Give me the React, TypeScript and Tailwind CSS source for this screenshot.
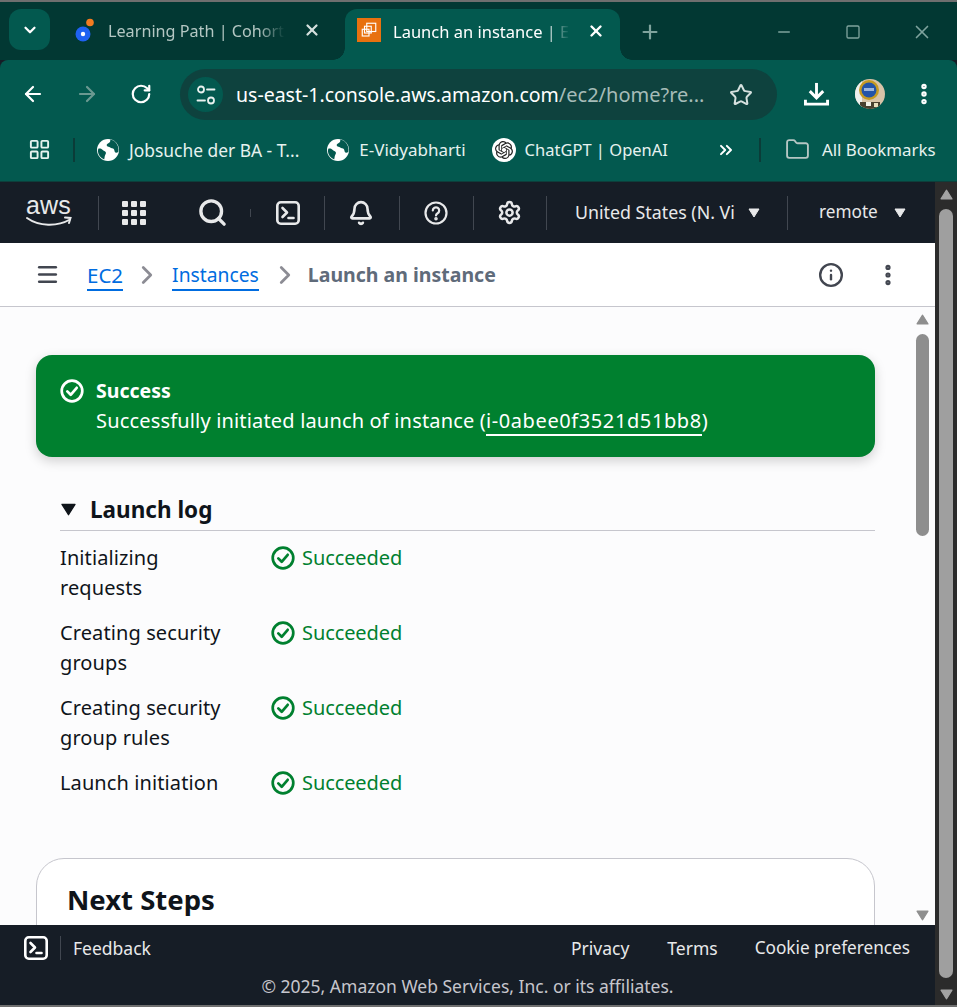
import React from 'react';
import {
    ArrowLeft,
    ArrowRight,
    Bell,
    ChevronDown,
    ChevronRight,
    ChevronsRight,
    EllipsisVertical,
    Folder,
    Info,
    LayoutGrid,
    Menu,
    Minus,
    Plus,
    RotateCw,
    Search,
    Settings,
    Square,
    Star,
    X,
} from 'lucide-react';
import { SiOpenai } from 'react-icons/si';

const FONT = "font-['Noto_Sans','Open_Sans',sans-serif]";

const Caret = ({ className }: { className: string }) => (
    <svg viewBox="0 0 12 10" className={className} fill="currentColor">
        <path d="M1 1h10L6 9z" stroke="currentColor" strokeLinejoin="round" />
    </svg>
);

const CaretUp = ({ className }: { className: string }) => (
    <svg viewBox="0 0 12 10" className={className} fill="currentColor">
        <path d="M1 9h10L6 1z" stroke="currentColor" strokeLinejoin="round" />
    </svg>
);

const CheckCircle = ({ className }: { className: string }) => (
    <svg viewBox="0 0 24 24" className={className} fill="none" stroke="currentColor" strokeWidth="2.7">
        <circle cx="12" cy="12" r="10.3" />
        <path d="M7.3 12.4l3.4 3.4 6-7" strokeLinecap="round" strokeLinejoin="round" />
    </svg>
);

const ConsoleIcon = ({ className }: { className: string }) => (
    <svg viewBox="0 0 24 24" className={className} fill="none" stroke="currentColor" strokeWidth="2.6">
        <rect x="1.3" y="1.3" width="21.4" height="21.4" rx="3.5" />
        <path d="M6.5 7l4.5 4.5L6.5 16" strokeLinecap="round" strokeLinejoin="round" />
        <path d="M12.5 17h5" strokeLinecap="round" />
    </svg>
);

const GlobeFilled = () => (
    <svg viewBox="0 0 22 22" className="w-[22px] h-[22px] shrink-0">
        <circle cx="11" cy="11" r="11" fill="#ffffff" />
        <path d="M13 .6c1 2-.4 3.300-2 3.900-1.200.5-1.600 1.600-1 2.500.7 1 2.200.6 3.200 1.400 1 .8 2.800.6 3.600 1.600.9 1.100.5 2.900 1.700 3.600.9.500 2 0 2.900-.8.500-3.400-.2-6.200-2.100-8.600C18.300 2.500 15.800 1 13 .6z" fill="#03594f" />
        <path d="M1.500 9.500c1.500-.3 3 .2 4 1.300 1 1 2.700 1.200 3.300 2.500.6 1.300-.6 2.400-1 3.600-.3 1.100-.2 2.400-.6 3.500C3.500 19 1.300 16 .9 12.600c-.1-1.100.1-2.100.6-3.100z" fill="#03594f" />
    </svg>
);

const SiteInfoIcon = () => (
    <svg viewBox="0 0 20 20" className="w-[20px] h-[20px]" fill="none" stroke="#e8f1ef" strokeWidth="1.8" strokeLinecap="round">
        <circle cx="5" cy="4.500" r="3" />
        <path d="M11 4.500h7.500" />
        <path d="M1.500 15.500H9" />
        <circle cx="15" cy="15.500" r="3" />
    </svg>
);

const DownloadIcon = () => (
    <svg viewBox="0 0 26 26" className="ml-[27px] w-[25px] h-[26px]" fill="none" stroke="#ffffff" strokeWidth="3">
        <path d="M13 1.500v15" />
        <path d="M6 10l7 7 7-7" />
        <path d="M1.500 19v4.500h23V19" />
    </svg>
);

const Divider = () => <div className="w-px h-[34px] bg-[#414750]" />;

const AwsLogo = () => (
    <div className="relative w-[46px] h-[30px]">
        <span className="absolute left-0 -top-[6px] text-[25px] leading-[26px] text-[#e8e9ea] tracking-[0.2px] font-['Liberation_Sans',sans-serif]">aws</span>
        <svg viewBox="0 0 46 12" className="absolute left-0 bottom-0 w-[46px] h-[12px]" fill="none" stroke="#e8e9ea" strokeWidth="2" strokeLinecap="round">
            <path d="M1 2c12 8.500 30 9 43 1.500" />
            <path d="M39 1.500l5.500 0.500-1.500 5" />
        </svg>
    </div>
);

const Avatar = () => (
    <svg viewBox="0 0 30 30" className="w-[30px] h-[30px]">
        <clipPath id="avatarClip">
            <circle cx="15" cy="15" r="15" />
        </clipPath>
        <g clipPath="url(#avatarClip)">
            <rect width="30" height="30" fill="#d8c3a8" />
            <rect width="7" height="30" fill="#eef0ee" />
            <circle cx="14" cy="11" r="10" fill="#c59a22" />
            <circle cx="14" cy="11" r="7.500" fill="#2354a8" />
            <rect x="9" y="9" width="10" height="3" fill="#9db6dd" />
            <rect x="5" y="23" width="20" height="7" fill="#4a4030" />
            <rect x="11" y="23" width="5" height="4" fill="#f3f1e8" />
            <rect x="19" y="24" width="4" height="4" fill="#e9dfc0" />
        </g>
    </svg>
);

const Bookmark = ({ icon, label, gap = 'gap-[10px]', size = 'text-[17px]' }: { icon: React.ReactNode; label: string; gap?: string; size?: string }) => (
    <div className={`flex items-center ${gap}`}>
        {icon}
        <span className={`${size} leading-6 text-[#e6f2ef] whitespace-nowrap`}>{label}</span>
    </div>
);

const TabTitle = ({ text, className }: { text: string; className: string }) => (
    <div className="relative overflow-hidden whitespace-nowrap">
        <span className={`leading-6 ${className}`}>{text}</span>
    </div>
);

const BrowserChrome = () => (
    <div className="shrink-0">
        {/* tab strip */}
        <div className="h-[58px] bg-[#023833] flex items-start pt-[7px] relative">
            <div className="ml-[9px] w-[41px] h-[41px] rounded-xl bg-[#03594f] flex items-center justify-center">
                <ChevronDown size={18} strokeWidth={3} className="text-white" />
            </div>
            <div className="ml-[25px] w-[270px] h-[41px] flex items-center">
                <svg viewBox="0 0 20 24" className="w-[20px] h-[24px] shrink-0">
                    <circle cx="8" cy="16" r="7.500" fill="#1f62f2" />
                    <circle cx="8" cy="16" r="2.200" fill="#ffffff" />
                    <circle cx="15" cy="4.500" r="3.800" fill="#f47b20" />
                </svg>
                <div className="ml-[13px] w-[177px] mt-[2px] [mask-image:linear-gradient(to_right,black_85%,transparent)] overflow-hidden">
                    <TabTitle text="Learning Path | Cohort" className="text-[16.2px] text-[#b4c7c3]" />
                </div>
                <X size={18} strokeWidth={3} className="ml-[18px] text-[#d5dfdd]" />
            </div>
            <div className="absolute left-[345px] top-[7px] w-[275px] h-[51px] rounded-t-xl bg-[#03594f] flex items-start pt-[5px] pl-[12px]">
                <div className="absolute -left-[12px] bottom-0 w-[12px] h-[12px] bg-[radial-gradient(circle_at_0_0,transparent_11.5px,#03594f_12px)]" />
                <div className="absolute -right-[12px] bottom-0 w-[12px] h-[12px] bg-[radial-gradient(circle_at_100%_0,transparent_11.5px,#03594f_12px)]" />
                <div className="w-[24px] h-[24px] mt-[4px] bg-[#e8710f] flex items-center justify-center shrink-0">
                    <svg viewBox="0 0 24 24" className="w-[18px] h-[18px]" fill="none" stroke="#ffffff" strokeWidth="1.500">
                        <rect x="9" y="3" width="12" height="11" />
                        <rect x="6" y="7" width="9" height="9" />
                        <rect x="3" y="11" width="9" height="9" />
                    </svg>
                </div>
                <div className="ml-[12px] w-[177px] mt-[6px] [mask-image:linear-gradient(to_right,black_85%,transparent)] overflow-hidden">
                    <TabTitle text="Launch an instance | EC2" className="text-[16.5px] text-white" />
                </div>
                <X size={18} strokeWidth={3.2} className="ml-[17px] mt-[8px] text-white" />
            </div>
            <Plus size={22} strokeWidth={2.4} className="absolute left-[639px] top-[19px] text-[#7fa39d]" />
            <Minus size={18} strokeWidth={2} className="absolute left-[775px] top-[21px] text-[#7fa39d]" />
            <Square size={16} strokeWidth={2} className="absolute left-[845px] top-[22px] text-[#7fa39d]" />
            <X size={22} strokeWidth={1.8} className="absolute left-[911px] top-[19px] text-[#7fa39d]" />
        </div>
        {/* toolbar */}
        <div className="h-[68px] bg-[#03594f] rounded-t-lg flex items-center pl-[21px]">
            <ArrowLeft size={24} strokeWidth={2.2} className="text-white" />
            <ArrowRight size={24} strokeWidth={2.2} className="ml-[30px] text-[#6b9991]" />
            <RotateCw size={22} strokeWidth={2.4} className="ml-[31px] text-white" />
            <div className="ml-[28px] w-[597px] h-[51px] rounded-full bg-[#0e423e] flex items-center pl-[8px] mt-[1px]">
                <div className="w-[35px] h-[35px] rounded-full bg-[#03594f] flex items-center justify-center shrink-0">
                    <SiteInfoIcon />
                </div>
                <span className="ml-[13px] w-[493px] text-[19.5px] leading-7 whitespace-nowrap text-white">
                    us-east-1.console.aws.amazon.com<span className="text-[20px] text-[#a6bcb8]">/ec2/home?re...</span>
                </span>
                <Star size={24} strokeWidth={2} className="text-[#d6e1df]" />
            </div>
            <DownloadIcon />
            <div className="ml-[26px]">
                <Avatar />
            </div>
            <EllipsisVertical size={26} strokeWidth={3} className="ml-[26px] text-white" />
        </div>
        {/* bookmarks bar */}
        <div className="h-[54px] bg-[#03594f] flex items-center pl-[28px] pb-[10px] border-b border-[#0d3f3b]">
            <LayoutGrid size={23} strokeWidth={2} className="text-[#e6f2ef]" />
            <div className="ml-[22px] w-[2px] h-[24px] bg-[#0b3c38]" />
            <div className="ml-[22px]">
                <Bookmark size="text-[17.4px]" icon={<GlobeFilled />} label="Jobsuche der BA - T..." />
            </div>
            <div className="ml-[28px]">
                <Bookmark icon={<GlobeFilled />} label="E-Vidyabharti" />
            </div>
            <div className="ml-[26px]">
                <Bookmark
                    gap="gap-[9px]"
                    size="text-[16.5px]"
                    icon={
                        <div className="w-[24px] h-[24px] rounded-full bg-white flex items-center justify-center">
                            <SiOpenai size={18} className="text-[#222222]" />
                        </div>
                    }
                    label="ChatGPT | OpenAI"
                />
            </div>
            <ChevronsRight size={20} strokeWidth={2.4} className="ml-[48px] text-white" />
            <div className="ml-[23px] w-[2px] h-[24px] bg-[#0b3c38]" />
            <Folder size={25} strokeWidth={1.8} className="ml-[24px] text-[#b5c6c3]" />
            <span className="ml-[12px] text-[16.9px] leading-6 whitespace-nowrap text-[#e6f2ef]">All Bookmarks</span>
        </div>
    </div>
);

const TopNav = () => (
    <div className="h-[61px] shrink-0 bg-[#161d26] flex items-center pl-[26px] text-[#e8e9ea]">
        <AwsLogo />
        <div className="ml-[26px]">
            <Divider />
        </div>
        <div className="ml-[23px] grid grid-cols-3 gap-[3px]">
            {Array.from({ length: 9 }).map((_, i) => (
                <div key={i} className="w-[6px] h-[6px] rounded-[1px] bg-[#e8e9ea]" />
            ))}
        </div>
        <Search size={31} strokeWidth={2.6} className="ml-[51px]" />
        <div className="ml-[22px] w-px h-[8px] bg-[#414750]" />
        <ConsoleIcon className="ml-[25px] w-[24px] h-[24px]" />
        <div className="ml-[24px]">
            <Divider />
        </div>
        <Bell size={26} strokeWidth={2.4} className="ml-[23px]" />
        <div className="ml-[25px]">
            <Divider />
        </div>
        <svg viewBox="0 0 24 24" className="ml-[24px] w-[24px] h-[24px]" fill="none" stroke="currentColor" strokeWidth="2.200">
            <circle cx="12" cy="12" r="10.500" />
            <path d="M8.800 9.500a3.200 3.200 0 1 1 4.800 2.800c-1 .6-1.600 1.100-1.600 2.200" strokeLinecap="round" />
            <circle cx="12" cy="17.800" r="0.700" fill="currentColor" />
        </svg>
        <div className="ml-[25px]">
            <Divider />
        </div>
        <Settings size={25} strokeWidth={2.4} className="ml-[23px]" />
        <div className="ml-[24px]">
            <Divider />
        </div>
        <span className="ml-[28px] w-[173px] -mt-[2px] text-[17.8px] leading-6 whitespace-nowrap">United States (N. Vi</span>
        <Caret className="w-[12px] h-[10px] text-[#e8e9ea]" />
        <div className="ml-[27px]">
            <Divider />
        </div>
        <span className="ml-[31px] w-[75px] -mt-[2px] text-[17.2px] leading-6">remote</span>
        <Caret className="w-[12px] h-[10px] text-[#e8e9ea]" />
    </div>
);

const Breadcrumbs = () => (
    <div className="h-[64px] shrink-0 bg-white border-b border-[#c6c6cd] flex items-center pl-[35px] pr-[34px]">
        <Menu size={25} strokeWidth={2.4} className="text-[#424650]" />
        <a className="ml-[27px] text-[20.5px] leading-7 text-[#006ce0] border-b-2 border-[#006ce0] -mb-[2px]">EC2</a>
        <ChevronRight size={30} strokeWidth={2.2} className="ml-[9px] text-[#8c8c94]" />
        <a className="ml-[10px] text-[19.3px] leading-7 text-[#006ce0] border-b-2 border-[#006ce0] -mb-[2px]">Instances</a>
        <ChevronRight size={30} strokeWidth={2.2} className="ml-[11px] text-[#8c8c94]" />
        <span className="ml-[8px] text-[19.5px] leading-7 font-bold text-[#5f6b7a]">Launch an instance</span>
        <Info size={26} strokeWidth={2.2} className="ml-auto text-[#424650]" />
        <EllipsisVertical size={26} strokeWidth={2.8} className="ml-[31px] text-[#424650]" />
    </div>
);

const logRows = [
    ['Initializing', 'requests'],
    ['Creating security', 'groups'],
    ['Creating security', 'group rules'],
    ['Launch initiation'],
];

const LogRow = ({ lines }: { lines: string[] }) => (
    <div className="flex text-[20px] leading-[30px]">
        <div className="w-[211px] text-[#0f141a] tracking-[0.1px]">
            {lines.map(line => (
                <div key={line}>{line}</div>
            ))}
        </div>
        <div className="flex items-center h-[30px] text-[#00802f]">
            <CheckCircle className="w-[24px] h-[24px]" />
            <span className="ml-[7px] tracking-[-0.1px]">Succeeded</span>
        </div>
    </div>
);

const MainContent = () => (
    <div className="flex-1 min-h-0 flex bg-[#fcfcfd] overflow-hidden">
        <div className="w-[875px] shrink-0 pl-[36px] pt-[48px]">
            <div className="w-[839px] h-[102px] rounded-2xl bg-[#00802f] shadow-[0_4px_12px_rgba(0,0,0,0.18)] flex pl-[24px] pt-[21px] text-white">
                <CheckCircle className="w-[24px] h-[24px] mt-[3px]" />
                <div className="ml-[12px] leading-[30px]">
                    <div className="font-bold text-[19.5px]">Success</div>
                    <div className="text-[20px] tracking-[0.17px] whitespace-nowrap">
                        Successfully initiated launch of instance (<span className="border-b-2 border-white tracking-[0.6px]">i-0abee0f3521d51bb8</span>)
                    </div>
                </div>
            </div>
            <div className="ml-[24px] mt-[33px] w-[815px] h-[41px] border-b border-[#c6c6cd] flex items-start">
                <Caret className="w-[17px] h-[13px] mt-[13px] text-[#0f141a]" />
                <span className="ml-[13px] text-[22.5px] leading-[38px] mt-[1px] font-bold text-[#0f141a]">Launch log</span>
            </div>
            <div className="ml-[24px] mt-[12px] flex flex-col gap-[15px]">
                {logRows.map(lines => (
                    <LogRow key={lines.join()} lines={lines} />
                ))}
            </div>
            <div className="mt-[60px] w-[839px] h-[120px] rounded-t-[28px] border border-[#c6c6cd] bg-white pl-[30px] pt-[21px]">
                <h2 className="text-[27.5px] leading-[40px] font-bold text-[#0f141a]">Next Steps</h2>
            </div>
        </div>
        <div className="ml-[38px] w-[19px] shrink-0 flex flex-col items-center pt-[7px] pb-[4px]">
            <CaretUp className="w-[15px] h-[11px] text-[#8e8e8e]" />
            <div className="mt-[9px] w-[13px] h-[202px] rounded-full bg-[#8e8e8e]" />
            <Caret className="mt-auto w-[15px] h-[11px] text-[#8e8e8e]" />
        </div>
    </div>
);

const Footer = () => (
    <div className="h-[80px] shrink-0 bg-[#161d26] relative text-[#e8e9ea]">
        <div className="flex items-center h-[46px] pl-[24px] pr-[25px] text-[17.5px] leading-6">
            <ConsoleIcon className="w-[24px] h-[24px] text-white" />
            <div className="ml-[12px] w-px h-[24px] bg-[#414750]" />
            <span className="ml-[12px]">Feedback</span>
            <span className="ml-auto">Privacy</span>
            <span className="ml-[38px]">Terms</span>
            <span className="ml-[37px] text-[17.2px]">Cookie preferences</span>
        </div>
        <div className="text-center text-[17.5px] leading-6 text-[#c6c6cd] pt-[3px]">© 2025, Amazon Web Services, Inc. or its affiliates.</div>
    </div>
);

const OuterScrollbar = () => (
    <div className="w-[22px] shrink-0 bg-[#2b2b2b] flex flex-col items-center pt-[7px] pb-[5px]">
        <CaretUp className="w-[15px] h-[11px] text-[#a3a3a3]" />
        <div className="mt-[9px] w-[14px] flex-1 rounded-full bg-[#9f9f9f]" />
        <Caret className="mt-[11px] w-[15px] h-[11px] text-[#a3a3a3]" />
    </div>
);

const App: React.FC = () => {
    return (
        <div className={`${FONT} w-[957px] h-[1007px] overflow-hidden flex flex-col border-t-2 border-b-2 border-[#6f6f6f] bg-[#161d26]`}>
            <BrowserChrome />
            <div className="flex-1 min-h-0 flex">
                <div className="w-[935px] shrink-0 flex flex-col">
                    <TopNav />
                    <Breadcrumbs />
                    <MainContent />
                    <Footer />
                </div>
                <OuterScrollbar />
            </div>
        </div>
    );
};

export default App;
